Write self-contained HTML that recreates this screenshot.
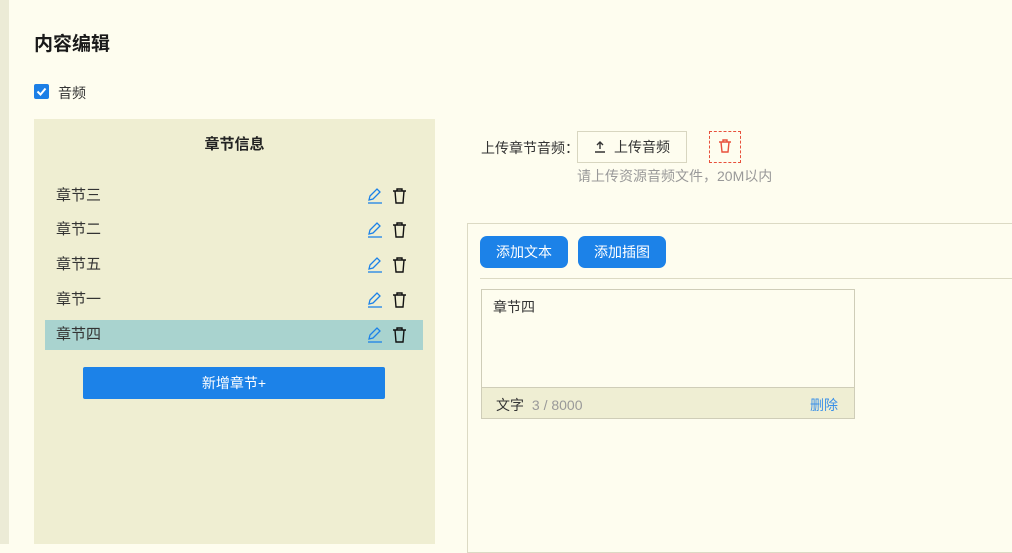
<!DOCTYPE html>
<html><head><meta charset="utf-8"><style>
*{box-sizing:border-box;margin:0;padding:0}
body{width:1012px;height:544px;overflow:hidden;background:#fefdef;font-family:"Liberation Sans","Noto Sans CJK SC",sans-serif;color:#222;position:relative}
.strip{position:absolute;left:0;top:0;width:9px;height:544px;background:#ecebd6}
.abs{position:absolute}
h1{position:absolute;left:34px;top:29px;font-size:19px;font-weight:bold;color:#1a1a1a}
.cb{left:34px;top:84px;width:15px;height:15px;background:#1c7fe6;border-radius:2px}
.panel{left:34px;top:119px;width:401px;height:425px;background:#efeed2}
.row{position:absolute;left:11px;width:378px;height:30px;font-size:15px;line-height:30px;padding-left:11px;color:#333}
.row.sel{background:#a9d3cf}
.btn{position:absolute;background:#1c82e8;color:#fff;font-size:14px;text-align:center}
</style></head><body>
<div class="strip"></div>
<h1>内容编辑</h1>
<div class="abs cb"><svg width="15" height="15"><path d="M3.5 7.5l3 3 5-6" stroke="#fff" stroke-width="2" fill="none"/></svg></div>
<div class="abs" style="left:58px;top:83px;font-size:14px;color:#333">音频</div>
<div class="abs panel">
 <div class="abs" style="left:0;width:401px;top:14px;text-align:center;font-size:15px;font-weight:bold">章节信息</div>
 <div class="row" style="top:62px">章节三</div>
 <div class="row" style="top:96px">章节二</div>
 <div class="row" style="top:131px">章节五</div>
 <div class="row" style="top:166px">章节一</div>
 <div class="row sel" style="top:201px">章节四</div>
 <div class="btn" style="left:49px;top:248px;width:302px;height:32px;line-height:32px;border-radius:2px">新增章节+</div>
</div>
<svg class="abs" style="left:366px;top:186px" width="48" height="170">
<g id="r"><path d="M3 14l1-4 7-7 3 3-7 7z" stroke="#1c82e8" stroke-width="1.3" fill="none"/><path d="M2 17h14" stroke="#1c82e8" stroke-width="1.3"/>
<path d="M27 5h13M31 5V3h5v2M29 5l1 12h7l1-12" stroke="#111" stroke-width="1.4" fill="none"/></g>
<use href="#r" y="34"/><use href="#r" y="69"/><use href="#r" y="104"/><use href="#r" y="139"/>
</svg>
<div class="abs" style="left:481px;top:138px;font-size:14px;color:#333">上传章节音频：</div>
<div class="abs" style="left:577px;top:131px;width:110px;height:32px;border:1px solid #d8d6c0;font-size:14px;line-height:30px;padding-left:36px;color:#333">上传音频</div>
<svg class="abs" style="left:593px;top:140px" width="14" height="14"><path d="M7 2v7M4 5l3-3 3 3M2 12h10" stroke="#333" stroke-width="1.4" fill="none"/></svg>
<div class="abs" style="left:709px;top:131px;width:32px;height:32px;border:1px dashed #e8503c"></div>
<svg class="abs" style="left:717px;top:138px" width="16" height="16"><path d="M2 4h12M6 4V2h4v2M4 4l1 10h6l1-10" stroke="#e8503c" stroke-width="1.4" fill="none"/></svg>
<div class="abs" style="left:577px;top:166px;font-size:14px;color:#999">请上传资源音频文件，20M以内</div>
<div class="abs" style="left:467px;top:223px;width:560px;height:330px;border:1px solid #dcdac4"></div>
<div class="btn" style="left:480px;top:236px;width:88px;height:32px;line-height:32px;border-radius:7px">添加文本</div>
<div class="btn" style="left:578px;top:236px;width:88px;height:32px;line-height:32px;border-radius:7px">添加插图</div>
<div class="abs" style="left:480px;top:278px;width:532px;height:1px;background:#dcdac4"></div>
<div class="abs" style="left:481px;top:289px;width:374px;height:130px;border:1px solid #cfcdb8"></div>
<div class="abs" style="left:482px;top:387px;width:372px;height:31px;background:#efeed3;border-top:1px solid #cfcdb8"></div>
<div class="abs" style="left:493px;top:297px;font-size:14px;color:#333">章节四</div>
<div class="abs" style="left:496px;top:395px;font-size:14px;color:#333">文字 <span style="color:#999;margin-left:4px">3 / 8000</span></div>
<div class="abs" style="left:810px;top:395px;font-size:14px;color:#3a90e8">删除</div>
</body></html>
